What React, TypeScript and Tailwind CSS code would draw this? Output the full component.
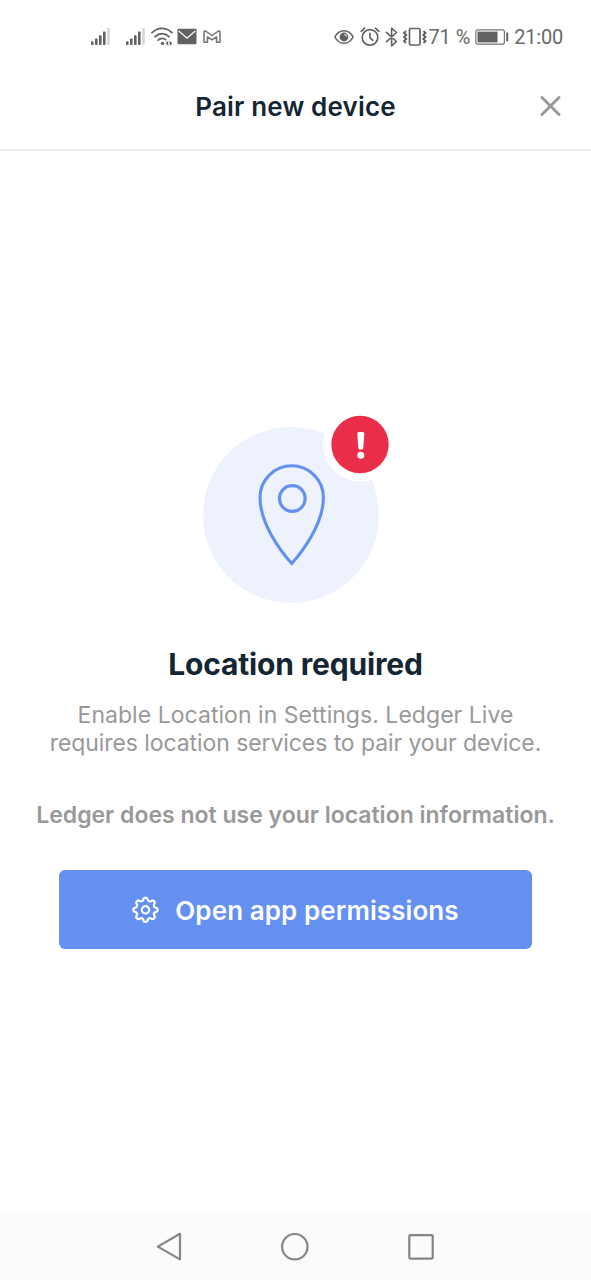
const gearPath = (() => {
  const steps = 160
  let d = ""
  for (let i = 0; i < steps; i++) {
    const angle = (i / steps) * Math.PI * 2
    const wave = Math.tanh(1.5 * Math.cos(angle * 8)) / Math.tanh(1.5)
    const radius = 10.7 + 1.4 * wave
    const x = 14.5 + Math.sin(angle) * radius
    const y = 13.8 - Math.cos(angle) * radius
    d += `${i === 0 ? "M" : "L"}${x.toFixed(2)} ${y.toFixed(2)}`
  }
  return d + "Z"
})()

function SignalIcon({ className }: { className?: string }) {
  return (
    <svg className={className} width="20" height="18" viewBox="0 0 20 18" fill="#626262">
      <rect x="0" y="13.3" width="2.6" height="3.7" rx="0.8" />
      <rect x="4" y="10.5" width="2.6" height="6.5" rx="0.8" />
      <rect x="8" y="7.3" width="2.6" height="9.7" rx="0.8" />
      <rect x="12" y="3.5" width="2.6" height="13.5" rx="0.8" />
      <rect x="16.2" y="0" width="2.6" height="17" rx="0.8" fill="#d6d6d6" />
    </svg>
  )
}

function WifiIcon() {
  return (
    <svg className="ml-[5px]" width="22" height="20" viewBox="0 0 22 20" fill="none" stroke="#626262" strokeWidth="1.8" strokeLinecap="round">
      <path d="M1 5.7C6.8-.2 15.2-.2 21 5.7" />
      <path d="M4 9.7C8.2 5.7 13.8 5.7 18 9.7" />
      <path d="M7.1 13.2C9.5 11 12.5 11 14.6 12.6" />
      <circle cx="11.5" cy="16.4" r="1.7" fill="#626262" stroke="none" />
      <path d="M17.200 13.6v5.400L14.800 16.300zM18.700 13.600v5.400l2.500-2.700z" fill="#626262" stroke="none" />
    </svg>
  )
}

function MailIcon() {
  return (
    <svg className="ml-[4px]" width="20" height="17" viewBox="0 0 20 17">
      <rect x="0.5" y="0.8" width="19" height="15.4" rx="1.2" fill="#626262" />
      <path d="M1.8 3 10 10.2 18.2 3" fill="none" stroke="#fff" strokeWidth="1.2" />
    </svg>
  )
}

function GmailIcon() {
  return (
    <svg className="ml-[6px]" width="18" height="14" viewBox="0 0 18 14" fill="none" stroke="#707070" strokeWidth="1.5" strokeLinejoin="round">
      <path d="M1 2.2Q1 .8 2.5 1L9 5.5 15.5 1Q17 .8 17 2.2V12.3H13.500V6.800L9 9.800 4.500 6.800V12.300H1z" />
    </svg>
  )
}

function EyeIcon() {
  return (
    <svg width="20" height="16" viewBox="0 0 20 16" fill="none" stroke="#626262" strokeWidth="1.6">
      <path d="M.9 8C5.2-.4 14.8-.4 19.1 8 14.8 16.4 5.2 16.4.9 8z" />
      <circle cx="10" cy="8" r="4.4" fill="#626262" stroke="none" />
      <path d="M10.2 5.4a2.5 2.5 0 0 1 2.3 2.3" stroke="#fff" strokeWidth="1" />
    </svg>
  )
}

function AlarmIcon() {
  return (
    <svg className="ml-[6px]" width="20" height="20" viewBox="0 0 20 20" fill="none" stroke="#626262" strokeWidth="1.7" strokeLinecap="round">
      <circle cx="10" cy="10.4" r="7.8" />
      <path d="M10 6.400v4.500l2.600 2.300M1.200 4.300l3.400-3.100M18.800 4.300l-3.400-3.100" />
    </svg>
  )
}

function BluetoothIcon() {
  return (
    <svg className="ml-[5px]" width="13" height="20" viewBox="0 0 13 20" fill="none" stroke="#626262" strokeWidth="1.6" strokeLinejoin="round" strokeLinecap="round">
      <path d="M1.5 5.3 11.5 14.5 6.6 18.8V1.2L11.5 5.5 1.5 14.7" />
    </svg>
  )
}

function VibrateIcon() {
  return (
    <svg className="ml-[4px]" width="26" height="20" viewBox="0 0 26 20" fill="none" stroke="#626262" strokeWidth="1.7">
      <rect x="7.5" y="1.5" width="10.500" height="16.500" rx="1.300" />
      <path d="m4 4-2 2 2.200 2L2 10l2.200 2L2 14l2 2M21.500 4l2 2-2.200 2 2.200 2-2.200 2 2.200 2-2 2" strokeWidth="1.9" />
    </svg>
  )
}

function BatteryIcon() {
  return (
    <svg className="ml-[5px]" width="34" height="16" viewBox="0 0 34 16" fill="none">
      <rect x="0.8" y="0.8" width="28.6" height="14.4" rx="2" stroke="#777" strokeWidth="1.2" />
      <rect x="2.5" y="2.6" width="20" height="10.8" fill="#626262" />
      <rect x="31.2" y="3.5" width="2" height="9" rx="0.8" fill="#626262" />
    </svg>
  )
}

function StatusBar() {
  return (
    <div className="flex h-[62px] items-center justify-between pt-[11px] pr-[28px] pl-[91px] font-[Roboto,sans-serif] text-[20px] text-[#6a6a6a]">
      <div className="flex items-center">
        <SignalIcon />
        <SignalIcon className="ml-[15px]" />
        <WifiIcon />
        <MailIcon />
        <GmailIcon />
      </div>
      <div className="flex items-center whitespace-nowrap">
        <EyeIcon />
        <AlarmIcon />
        <BluetoothIcon />
        <VibrateIcon />
        <span className="tracking-[-0.1px]">71 %</span>
        <BatteryIcon />
        <span className="ml-[5px] tracking-[-0.2px]">21:00</span>
      </div>
    </div>
  )
}

function Header() {
  return (
    <header className="grid h-[89px] grid-cols-[1fr_auto_1fr] items-center border-b-2 border-[#eeeeee]">
      <h1 className="col-start-2 pt-[1px] text-[26px] font-semibold tracking-[0.16px] text-[#142533]">Pair new device</h1>
      <button className="mr-[30px] justify-self-end" aria-label="Close">
        <svg width="21" height="22" viewBox="0 0 21 22" fill="none" stroke="#999" strokeWidth="2.9" strokeLinecap="round">
          <path d="m2 2.500 17 17M19 2.500l-17 17" />
        </svg>
      </button>
    </header>
  )
}

function LocationIllustration() {
  return (
    <svg className="ml-[3px]" width="206" height="188" viewBox="0 0 206 188" fill="none">
      <circle cx="97" cy="100" r="88" fill="#edf2fd" />
      <circle cx="166" cy="29.5" r="37" fill="#fff" />
      <circle cx="166" cy="29.5" r="28.7" fill="#ea2e49" />
      <path d="M97.7 148.5C87 136.5 66 109 66 82.5a31.7 31.7 0 0 1 63.4 0C129.4 109 108.4 136.5 97.7 148.5z" stroke="#6490f1" strokeWidth="3.1" />
      <circle cx="98.3" cy="83.5" r="12.8" stroke="#6490f1" strokeWidth="3.2" />
      <path d="M163.3 18.5q0-1.5 1.5-1.5h4q1.5 0 1.5 1.5l-1 14.5q-.1 1.5-1.5 1.5h-2q-1.4 0-1.500-1.500z" fill="#fff" />
      <circle cx="166.8" cy="40.3" r="3.5" fill="#fff" />
    </svg>
  )
}

function NavigationBar() {
  return (
    <nav className="flex h-[66px] items-center justify-between bg-[#fbfbfb] pr-[157px] pl-[155px]">
      <svg width="27" height="30" viewBox="0 0 27 30" fill="none" stroke="#858585" strokeWidth="2.2" strokeLinejoin="round">
        <path d="M2.8 14.6 25 1.8v25.6z" />
      </svg>
      <svg width="28" height="28" viewBox="0 0 28 28" fill="none" stroke="#858585" strokeWidth="2.2">
        <circle cx="13.800" cy="13.700" r="12.700" />
      </svg>
      <svg width="26" height="26" viewBox="0 0 26 26" fill="none" stroke="#858585" strokeWidth="2.2">
        <rect x="1.3" y="1.2" width="23.400" height="23.400" rx="1" />
      </svg>
    </nav>
  )
}

export default function App() {
  return (
    <div className="flex h-[1280px] w-[591px] flex-col bg-white font-[Inter,sans-serif]">
      <StatusBar />
      <Header />
      <main className="flex flex-1 flex-col items-center pt-[264px] whitespace-nowrap">
        <LocationIllustration />
        <h2 className="mt-[41px] text-[30px] leading-[40px] font-bold tracking-[-0.17px] text-[#142533]">Location required</h2>
        <p className="mt-[17px] text-center text-[23px] leading-[28px] text-[#999]">
          <span className="tracking-[0.04px]">Enable Location in Settings. Ledger Live</span>
          <br />
          <span className="tracking-[-0.08px]">requires location services to pair your device.</span>
        </p>
        <p className="mt-[44px] text-[23px] leading-[28px] font-semibold text-[#999]">
          Ledger does not use your location information.
        </p>
        <button className="mt-[41px] flex h-[79px] w-[473px] items-center justify-center gap-[16px] rounded-[6px] bg-[#6490f1] pr-[1px] text-[26px] font-semibold tracking-[0.08px] text-white">
          <svg width="28" height="28" viewBox="0 0 28 28" fill="none" stroke="currentColor" strokeWidth="2.2" strokeLinejoin="round">
            <path d={gearPath} />
            <circle cx="14.5" cy="13.8" r="3.7" />
          </svg>
          <span className="pt-[2px]">Open app permissions</span>
        </button>
      </main>
      <NavigationBar />
    </div>
  )
}
